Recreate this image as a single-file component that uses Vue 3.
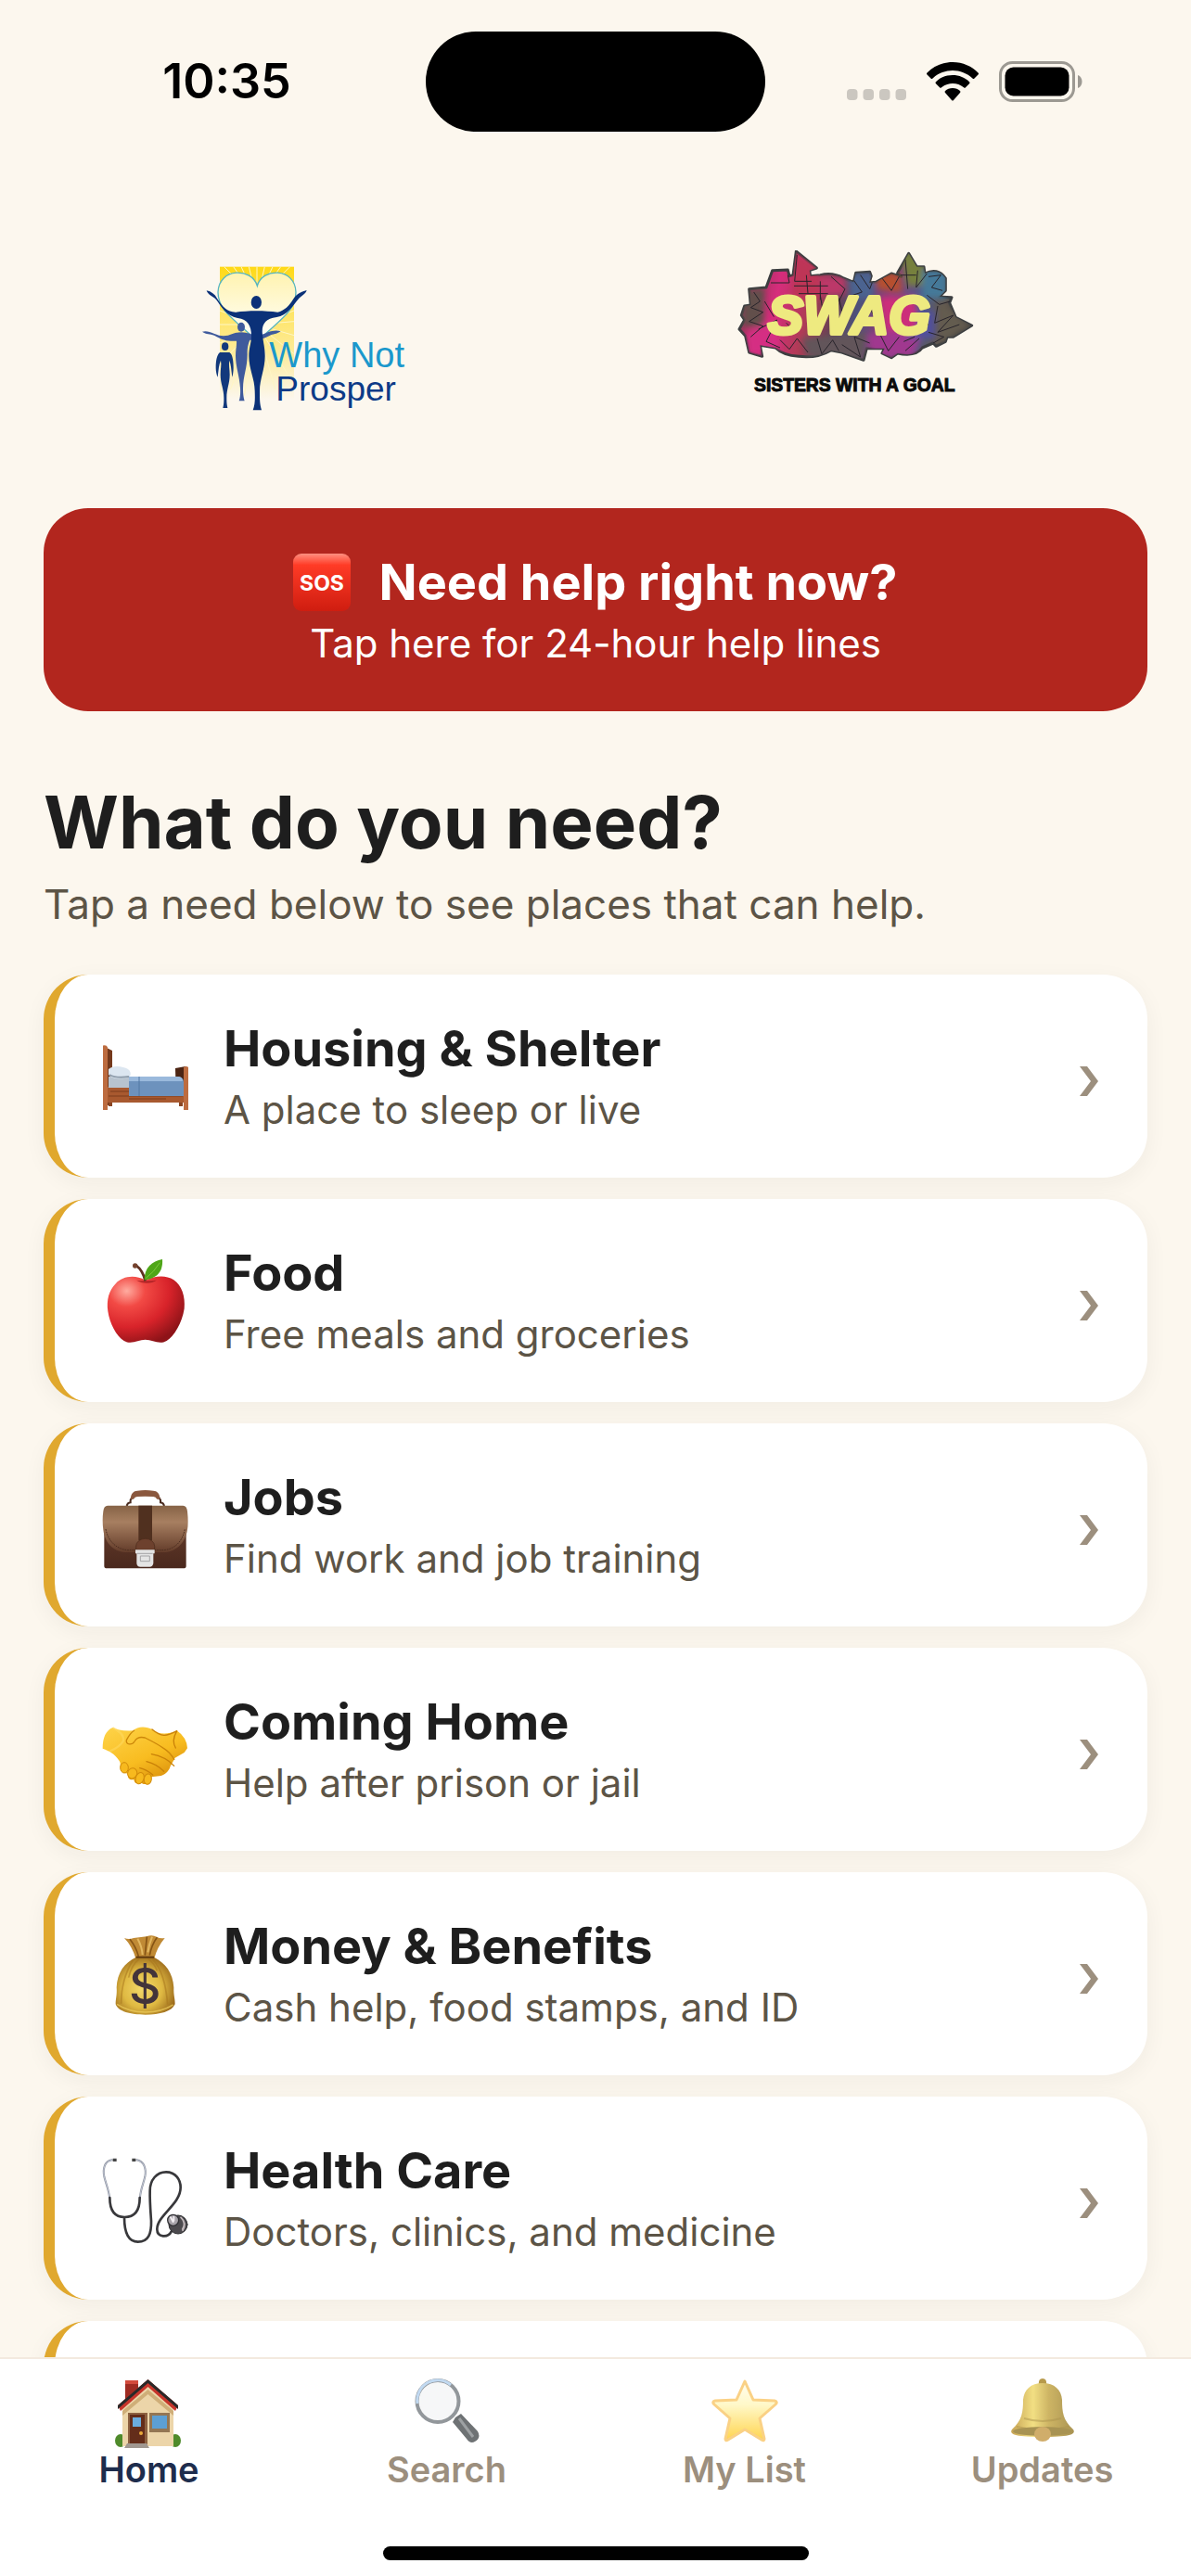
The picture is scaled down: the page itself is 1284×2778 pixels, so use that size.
<template>
  <div class="app">
    <header class="status-bar">
      <div class="status-side">
        <time class="clock">10:35</time>
      </div>
      <div class="island"></div>
      <div class="status-side status-icons">
        <svg class="signal" viewBox="0 0 64 12" aria-hidden="true">
          <rect v-for="n in 4" :key="n" :x="(n - 1) * 17.5" width="11.5" height="12" rx="4" />
        </svg>
        <svg class="wifi" viewBox="0 0 56 42" aria-hidden="true">
          <path d="M28 0C39 0 49 4.500 55.500 11.500q1 1 0 2L51.500 17.500q-1 1-2 0C43.500 12 36 9 28 9S12.500 12 6.500 17.500q-1 1-2 0L.5 13.500q-1-1 0-2C7 4.500 17 0 28 0Z" />
          <path d="M28 14c7 0 13.500 2.700 18 7.200q1 1 0 2L42 27.300q-1 1-2 0C36.500 24.500 32.500 23 28 23s-8.500 1.500-12 4.300q-1 1-2 0L10 23.200q-1-1 0-2C14.500 16.700 21 14 28 14Z" />
          <path d="M28 28c3.200 0 6 1.100 8 2.900q1 1 0 2L29 41q-1 1-2 0L20 32.900q-1-1 0-2C22 29.100 24.800 28 28 28Z" />
        </svg>
        <svg class="battery" viewBox="0 0 90 44" aria-hidden="true">
          <rect x="1.500" y="1.500" width="79" height="41" rx="13" fill="none" stroke="#9c9992" stroke-width="3" />
          <rect x="6.500" y="6.500" width="69" height="31" rx="9" />
          <path d="M85 15c6 2 6 12 0 14Z" fill="#9c9992" />
        </svg>
      </div>
    </header>

    <main class="content">
      <div class="logos">
        <svg class="logo" viewBox="-45 0 960 570" role="img" aria-label="Why Not Prosper">
          <defs>
            <linearGradient id="sun" x1="0" y1="0" x2="0" y2="1">
              <stop offset="0" stop-color="#ffd916" />
              <stop offset="0.3" stop-color="#ffe45c" />
              <stop offset="0.65" stop-color="#fdeb9c" />
              <stop offset="1" stop-color="#fcf7ee" />
            </linearGradient>
            <linearGradient id="heart" x1="0" y1="0" x2="0" y2="1">
              <stop offset="0" stop-color="#fff3b0" />
              <stop offset="1" stop-color="#ffffff" />
            </linearGradient>
          </defs>
          <rect x="111" y="53" width="240" height="430" fill="url(#sun)" />
          <g stroke="#fff6c4" stroke-width="3">
            <path d="M231 160 125 53M231 160 155 53M231 160 180 53M231 160 205 53M231 160V53M231 160 256 53M231 160 282 53M231 160 308 53M231 160 338 53" />
            <path d="M231 240 111 195M231 240 111 240M231 240 111 300M231 240 111 370M231 240 145 450M231 240 190 470M231 240 351 195M231 240 351 230M231 240 351 275M231 240 351 335M231 240 330 400M231 240 290 450" />
          </g>
          <path d="M232 115C215 55 108 55 105 135c0 65 65 95 127 160 65-65 125-95 125-160C354 55 248 55 232 115Z" fill="url(#heart)" stroke="#56b5c0" stroke-width="4" />
          <!-- smaller figures -->
          <g fill="#3f5a9c">
            <ellipse cx="180" cy="248" rx="12" ry="15" />
            <path d="M54 263c12-4 24 0 38 6 24 10 38 10 62 0 18-6 36-6 54 0 20 10 34 8 58-4 14-4 28-8 42-3-14 10-24 8-36 14-24 12-42 16-64 14-8 20-8 30-8 46 0 45-14 70-14 110 0 20 2 30 5 41h-18c4-10 5-25 4-41-2-40-15-70-15-105 0-20 4-32 3-48-24 2-46-2-72-18-14-6-26-2-39-12Z" />
          </g>
          <g fill="#12397c">
            <ellipse cx="128" cy="311" rx="11" ry="13" />
            <path d="M112 330h30c10 5 13 28 13 50 0 12-2 24-4 30-3-24-4-42-9-54-3 15 1 28 1 46 0 30-10 46-10 75 0 14 0 20 3 33h-15c3-13 3-19 3-33 0-29-11-45-11-75 0-18 4-31 1-46-6 12-7 30-10 54-3-6-6-18-6-30 0-24 4-45 14-50Z" />
          </g>
          <g fill="#0b3178">
            <ellipse cx="229" cy="168" rx="17" ry="21" />
            <path d="M68 130c15 3 27 12 34 25 18 28 32 43 60 45 40-6 95-6 136 0 22-5 38-22 50-42 10-15 24-24 44-29-4 12-16 18-25 26-20 24-38 55-72 61-40 5-50 26-46 58 3 28 8 42 8 68 0 42-17 75-17 112 0 30 0 43 6 63h-28c7-20 7-33 6-63 0-38-19-70-19-112 0-26 8-42 8-66 0-32-12-53-44-57-36-5-54-38-70-60-12-12-26-14-31-29Z" />
          </g>
          <text x="271" y="379" font-size="114" class="logo-name" fill="#1b98cc">Why Not</text>
          <text x="292" y="485" font-size="111" class="logo-name" fill="#0d3a87">Prosper</text>
        </svg>

        <svg class="logo" viewBox="-3 45 960 570" role="img" aria-label="SWAG, Sisters With A Goal">
          <defs>
            <linearGradient id="spray" x1="0" y1="0" x2="1" y2="0.1">
              <stop offset="0" stop-color="#5b474c" />
              <stop offset="0.1" stop-color="#a5325f" />
              <stop offset="0.2" stop-color="#d62c7c" />
              <stop offset="0.34" stop-color="#b03c56" />
              <stop offset="0.46" stop-color="#684154" />
              <stop offset="0.56" stop-color="#4c527c" />
              <stop offset="0.68" stop-color="#8d3c76" />
              <stop offset="0.82" stop-color="#4d5a8b" />
              <stop offset="0.92" stop-color="#61574f" />
              <stop offset="1" stop-color="#3f3b38" />
            </linearGradient>
            <clipPath id="wall"><path :d="wallPath" /></clipPath>
            <filter id="mist"><feGaussianBlur stdDeviation="9" /></filter>
          </defs>
          <path :d="wallPath" fill="url(#spray)" stroke="#3c3e40" stroke-width="9" stroke-linejoin="round" />
          <g clip-path="url(#wall)">
            <g filter="url(#mist)">
              <path d="M60 180 130 165 125 290 60 290Z" fill="#624f4b" />
              <path d="M70 310 170 270 180 370 80 385Z" fill="#d52f83" />
              <path d="M225 50 300 100 320 200 220 200Z" fill="#be3457" />
              <path d="M250 330 460 310 450 400 270 390Z" fill="#62545a" />
              <path d="M310 130h80v60h-80Z" fill="#bc3869" />
              <path d="M400 120h85l-5 80h-70Z" fill="#4b6390" />
              <path d="M490 120h75l10 60-80-10Z" fill="#b6502d" />
              <path d="M570 50h75v110h-55Z" fill="#76803c" />
              <path d="M640 110h80v90h-80Z" fill="#447999" />
              <path d="M460 320 650 290 610 390 480 390Z" fill="#a0388f" />
              <path d="M590 240h90v90h-90Z" fill="#51509c" />
              <path d="M690 200 800 290 690 350Z" fill="#635c50" />
              <path d="M500 195h120v110H520Z" fill="#cc2d7a" />
            </g>
            <path d="M150 150h60l-5-25M235 60l-8 85h55M225 160h110M240 185h95M265 125l5 60M310 145v60M95 180l20 30-30 20 40 15-45 30 45 15-40 35M110 300l60-30-35 70 45 20M180 335l30 30 25-35 35 45M300 330l15 50 35-45 20 35M380 350l60 40-20-65 50 20M345 130l45 40-20 40M410 130l35 50-30 10M440 125l30 45 15-40M510 135l30 40 25-45M585 75l8 95M570 125h50M625 110l-5 55 35-45M660 130l40-5-30 40 35 10M655 190l40 30 35-10M690 225l-10 55 60-25-50 55 70-25M630 330l-45 40M505 320l25 50 35-45M580 340l35-15M620 250l40 35-45 35M660 310l50 15-35 20M310 190l15 90M370 200l20 80M465 220l30 60M200 280l30 30M130 210l30 50" fill="none" stroke="#28242b" stroke-width="3" stroke-linejoin="round" />
          </g>
          <text class="swag" x="140" y="316">SWAG</text>
          <text x="96" y="500" class="swag-sub">SISTERS WITH A GOAL</text>
        </svg>
      </div>

      <button class="sos-banner" type="button">
        <span class="sos-title">
          <svg class="sos-icon" viewBox="0 0 62 62" aria-hidden="true">
            <defs>
              <linearGradient id="sos" x1="0" y1="0" x2="0" y2="1">
                <stop offset="0" stop-color="#ff8f80" />
                <stop offset="0.2" stop-color="#ff3b26" />
                <stop offset="1" stop-color="#cf1d10" />
              </linearGradient>
            </defs>
            <rect width="62" height="62" rx="9" fill="url(#sos)" />
            <text x="31" y="40" text-anchor="middle">SOS</text>
          </svg>
          Need help right now?
        </span>
        <span class="sos-sub">Tap here for 24-hour help lines</span>
      </button>

      <h1>What do you need?</h1>
      <p class="intro">Tap a need below to see places that can help.</p>

      <ul class="needs">
        <li v-for="need in needs" :key="need.icon">
          <button class="card" type="button">
            <svg class="need-icon" :viewBox="need.viewBox" aria-hidden="true">
              <g v-if="need.icon === 'bed'">
                <path d="M82 39 93 37V75H83Z" fill="#4b2413" />
                <path d="M4 15 14 20V79H4Z" fill="#75391c" />
                <rect x="9" y="59" width="84" height="17" fill="#a8592f" />
                <path d="M10 69h80M12 64h20M32 72h40" stroke="#7d3d1d" stroke-width="1" />
                <path d="M10 48h24v12H10Z" fill="#b8c3ce" />
                <path d="M10 40c5-5 16-3 21 0 4 3 3 7 1 9-8 2-18 2-22-3Z" fill="#dce6f0" />
                <path d="M11 46c7 4 15 3 21 2" fill="none" stroke="#8f9dab" stroke-width="2" />
                <path d="M32 48h54q5 1 5 6v15H32Z" fill="#6d92bd" />
                <path d="M32 48h54q4 1 4 5H32Z" fill="#9ab9dc" />
                <path d="M43 48v21" stroke="#5379a4" stroke-width="1" />
                <path d="M4 14.500q4-1 5 2V84H4ZM91 38q3-2 5 0V84H91Z" fill="#bd6c40" />
                <path d="M10 76h4v4h-4ZM86 76h4v4h-4Z" fill="#8a4523" />
              </g>
              <g v-else-if="need.icon === 'apple'">
                <defs>
                  <radialGradient id="apple" cx="0.25" cy="0.22" r="0.85">
                    <stop offset="0" stop-color="#ffaca0" />
                    <stop offset="0.28" stop-color="#f24a45" />
                    <stop offset="0.65" stop-color="#d8232a" />
                    <stop offset="1" stop-color="#8e1318" />
                  </radialGradient>
                </defs>
                <path d="M200 150C165 130 125 138 105 160 82 182 74 215 79 250c5 38 28 82 52 96 25 14 45-4 69-4s44 18 69 4c24-14 50-58 57-104 4-40-8-75-34-93-26-17-60-14-92 1Z" fill="url(#apple)" />
                <path d="M172 150c18 12 48 12 64 0-20 2-44 2-64 0Z" fill="#8e1318" opacity="0.6" />
                <path d="M200 152C194 128 184 112 170 102" fill="none" stroke="#5f3020" stroke-width="8" />
                <circle cx="167" cy="103" r="8" fill="#75432e" />
                <path d="M197 149C196 110 222 88 255 82c3 36-14 62-58 67Z" fill="#4fa618" />
                <path d="M202 143q25-18 45-50" fill="none" stroke="#7bc93b" stroke-width="3" />
              </g>
              <g v-else-if="need.icon === 'briefcase'">
                <defs>
                  <linearGradient id="flap" x1="0" y1="0" x2="0" y2="1">
                    <stop offset="0" stop-color="#866346" />
                    <stop offset="0.35" stop-color="#a77f61" />
                    <stop offset="1" stop-color="#633c2a" />
                  </linearGradient>
                  <linearGradient id="case" x1="0" y1="0" x2="0" y2="1">
                    <stop offset="0.4" stop-color="#5b3526" />
                    <stop offset="1" stop-color="#4a281d" />
                  </linearGradient>
                </defs>
                <path d="M140 130q2-10 12-11v-8l8-12M261 130q-2-10-12-11v-8l-8-12" fill="none" stroke="#4a2c20" stroke-width="6" />
                <path d="M152 108c2-20 10-26 22-27q26-4 52 0c12 1 20 7 22 27h-10q-4-7-12-8-27-2-52 0-8 1-12 8Z" fill="#8a573d" />
                <path d="M67 170h265v154q0 8-9 8H76q-9 0-9-8Z" fill="url(#case)" />
                <path d="M78 129h244q12 0 14 18 4 36 0 60c-8 48-42 73-78 73H142c-40 0-72-25-78-73q-4-30 0-60 2-18 14-18Z" fill="url(#flap)" />
                <path d="M72 205c8 42 38 66 72 68h114c35-2 62-26 70-68" fill="none" stroke="#4b2d20" stroke-width="3" stroke-dasharray="5 3" />
                <path d="M178 129h44v112h-44Z" fill="#50301f" />
                <path d="M170 272v-12a30 24 0 0 1 60 0v12Z" fill="#6d412e" stroke="#482819" stroke-width="2" />
                <path d="M168 272h62v12h-4v32q-2 11-12 11h-30q-11 0-12-11v-32h-4Z" fill="#e4e4e4" />
                <path d="M174 284h50M184 292h30v17h-30Z" fill="none" stroke="#a4a4a6" stroke-width="3" />
              </g>
              <g v-else-if="need.icon === 'handshake'">
                <defs>
                  <linearGradient id="hands" x1="0" y1="0" x2="0.7" y2="1">
                    <stop offset="0" stop-color="#fed44a" />
                    <stop offset="0.6" stop-color="#f8bc20" />
                    <stop offset="1" stop-color="#d88d0b" />
                  </linearGradient>
                </defs>
                <path d="M95 97q18 12 65 10c15-16 45-14 62-4 18 15 45 20 80 4q32 22 34 57l-10 14-30 17-15 27c-5 18-20 30-36 32l-25 3-10 18c-12 10-20 4-24-2-12 10-22 4-23-8-14 4-22-4-18-20-15 3-27-8-26-24q2-10-3-16C100 180 85 174 62 165 62 130 72 106 95 97Z" fill="url(#hands)" />
                <path d="M95 98q38 18 34 42-12 20-44 34" fill="none" stroke="#ffdb65" stroke-width="7" opacity="0.5" />
                <path d="M165 106c-14 8-20 20-26 32-3 15 18 17 26 4 8-14 18-16 34-12 24 12 40 20 60 34 20 12 28 24 35 38" fill="none" stroke="#cc870a" stroke-width="4" />
                <path d="M222 103c30 25 45 24 80 5M302 108q-18 32-4 55M220 183q45 8 73 38M204 207q33 8 56 32M182 228q20 4 42 22" fill="none" stroke="#c98108" stroke-width="4" stroke-linecap="round" />
                <g fill="#f7b91e" stroke="#d18a0a" stroke-width="3">
                  <ellipse cx="132" cy="227" rx="13" ry="17" />
                  <ellipse cx="158" cy="245" rx="15" ry="17" transform="rotate(20 158 245)" />
                  <ellipse cx="182" cy="261" rx="13" ry="19" transform="rotate(20 182 261)" />
                  <ellipse cx="208" cy="264" rx="12" ry="17" transform="rotate(10 208 264)" />
                </g>
              </g>
              <g v-else-if="need.icon === 'money'">
                <defs>
                  <radialGradient id="sack" cx="0.45" cy="0.55" r="0.6">
                    <stop offset="0" stop-color="#f4d96a" />
                    <stop offset="0.55" stop-color="#dfb942" />
                    <stop offset="1" stop-color="#99671a" />
                  </radialGradient>
                </defs>
                <path d="M132 88q15 6 30 0l42-5q18-7 34 2 10 6 25 3-25 30-34 66h-60q-12-40-37-66Z" fill="#c08a35" />
                <path d="M150 92q20 25 28 55M205 84l-6 60M238 86q-18 25-24 58" fill="none" stroke="#865415" stroke-width="5" />
                <path d="M175 90q14 25 16 52M222 84q-10 25-14 50" fill="none" stroke="#e2b862" stroke-width="6" />
                <path d="M170 150h58c36 18 62 50 64 98-1 26 4 34 4 54-10 24-48 34-96 34s-88-10-96-34c0-18 5-30 3-54 2-48 25-80 63-98Z" fill="url(#sack)" />
                <path d="M160 160q-38 60-38 140M180 156q-25 20-34 60M224 158q40 40 48 145M210 156q20 15 28 38" fill="none" stroke="#a8761d" stroke-width="5" opacity="0.55" />
                <path d="M108 302q40 26 92 26t90-24" fill="none" stroke="#f0cf5c" stroke-width="5" opacity="0.7" />
                <path d="M170 150h58" stroke="#60390f" stroke-width="6" />
                <text x="199" y="300" class="dollar">$</text>
              </g>
              <g v-else-if="need.icon === 'stethoscope'" fill="none" stroke-linecap="round">
                <path d="M92 86C68 90 62 115 67 140c5 22 14 40 17 66M172 86c24 4 32 29 27 54-5 22-14 40-16 66" stroke="#8a8f9d" stroke-width="6" />
                <path d="M92 86C68 90 62 115 67 140c5 22 14 40 17 66M172 86c24 4 32 29 27 54-5 22-14 40-16 66" stroke="#dce2ef" stroke-width="2" />
                <path d="M95 86h12M157 86h12" stroke="#444" stroke-width="10" stroke-linecap="butt" />
                <path d="M85 208c0 40 14 63 48 63s49-23 49-63M132 272c0 50 12 79 44 79 35 0 44-28 43-68-2-30-5-65-4-97 0-36 22-61 52-61 32 0 47 25 47 50 0 55-76 90-76 135 0 28 36 28 46 8" stroke="#38383b" stroke-width="8" />
                <circle cx="306" cy="295" r="30" fill="#4c4a4e" stroke="#2d2d30" stroke-width="3" />
                <path d="M315 272q20 18 6 42M322 282q8 14-2 28" stroke="#c3b9bc" stroke-width="5" />
                <circle cx="290" cy="281" r="18" fill="#a7a3a9" stroke="#323236" stroke-width="4" />
                <path d="M282 272l8 14M292 270v12" stroke="#f2eef2" stroke-width="6" />
              </g>
            </svg>
            <span class="card-text">
              <span class="card-title">{{ need.title }}</span>
              <span class="card-sub">{{ need.sub }}</span>
            </span>
            <svg v-if="need.title" class="chevron" viewBox="0 0 20 32" aria-hidden="true">
              <path d="M0 0H8L20 16 8 32H0L12 16Z" />
            </svg>
          </button>
        </li>
      </ul>
    </main>

    <nav class="tab-bar">
      <a v-for="tab in tabs" :key="tab.label" href="#" class="tab" :class="{ active: tab.active }">
        <svg class="tab-icon" viewBox="0 0 76 76" aria-hidden="true">
          <g v-if="tab.label === 'Home'">
            <path d="M12 3h14v24H12Z" fill="#9f2b22" />
            <path d="M12 3h14v4H12Z" fill="#d24a3c" />
            <ellipse cx="7" cy="68" rx="6" ry="7" fill="#4f8b2b" />
            <ellipse cx="66" cy="68" rx="6" ry="7" fill="#4f8b2b" />
            <path d="M9 33 36.500 9 64 33V74H9Z" fill="#ecd5a9" />
            <path d="M9 36 36.500 13 64 36v5L36.500 18 9 41Z" fill="#cfae78" />
            <path d="M36.500 2 69 30 66 36 36.500 10 7 36 4 30Z" fill="#c7352b" />
            <path d="M36.500 2 69 30v4L36.500 6 4 34v-4Z" fill="#292929" />
            <path d="M15 38h21v34H15Z" fill="#8c6040" />
            <path d="M17 40h16v31H17Z" fill="#642d1a" />
            <path d="M20 43h9v10h-9Z" fill="#6bacde" />
            <circle cx="29" cy="60" r="2" fill="#e9a93a" />
            <path d="M38 38h22v21H38Z" fill="#947653" />
            <path d="M41 41h16v14H41Z" fill="#5c9fd4" />
            <path d="M14 71h21l3 5H11Z" fill="#a09790" />
          </g>
          <g v-else-if="tab.label === 'Search'">
            <path d="M47 43l6-4 18 19q4 7-3 11-5 3-9-3L44 48Z" fill="#6e7274" />
            <path d="M51 44l15 20" stroke="#9da1a3" stroke-width="3" />
            <circle cx="28" cy="25.500" r="22.500" fill="#f6f7f8" stroke="#92979b" stroke-width="4" />
            <path d="M6 28A22 22 0 0 1 42 8" fill="none" stroke="#c1d9f1" stroke-width="3" />
          </g>
          <g v-else-if="tab.label === 'My List'">
            <defs>
              <linearGradient id="star" x1="0" y1="0" x2="0" y2="1">
                <stop offset="0" stop-color="#fffdf1" />
                <stop offset="0.4" stop-color="#fff8c8" />
                <stop offset="1" stop-color="#ffd44e" />
              </linearGradient>
            </defs>
            <path d="M38 4 47 24 70 25q4 1 1 4L54 44 59 66q0 3-3 1L38 56 20 67q-3 2-3-1L22 44 5 29q-3-3 1-4L29 24Z" fill="url(#star)" stroke="#fad185" stroke-width="3" stroke-linejoin="round" />
          </g>
          <g v-else>
            <defs>
              <linearGradient id="bell" x1="0" y1="0" x2="1" y2="0">
                <stop offset="0" stop-color="#c7a455" />
                <stop offset="0.35" stop-color="#f2df83" />
                <stop offset="0.6" stop-color="#cdb464" />
                <stop offset="1" stop-color="#aa9453" />
              </linearGradient>
            </defs>
            <path d="M34 8q-1-7 4-7t4 7Z" fill="#b79a4c" />
            <path d="M38 6c13 0 20 7 21 18 0 13 1 22 12 32 4 6-7 8-33 8S1 62 5 56C16 46 17 37 17 24 18 13 25 6 38 6Z" fill="url(#bell)" />
            <path d="M18 44q20 6 40 0M10 53q28 7 56 0" fill="none" stroke="#ab934d" stroke-width="2" opacity="0.5" />
            <ellipse cx="38" cy="58" rx="32" ry="5" fill="#a89353" />
            <ellipse cx="38" cy="61" rx="9" ry="8" fill="#d0ad6a" />
          </g>
        </svg>
        <span>{{ tab.label }}</span>
      </a>
    </nav>
    <div class="home-indicator"><span></span></div>
  </div>
</template>

<script setup>
import { ref } from 'vue';

const needs = ref([
  { icon: 'bed', viewBox: '0 0 96 96', title: 'Housing & Shelter', sub: 'A place to sleep or live' },
  { icon: 'apple', viewBox: '51 73 288 288', title: 'Food', sub: 'Free meals and groceries' },
  { icon: 'briefcase', viewBox: '51 49 288 288', title: 'Jobs', sub: 'Find work and job training' },
  { icon: 'handshake', viewBox: '51 25 288 288', title: 'Coming Home', sub: 'Help after prison or jail' },
  { icon: 'money', viewBox: '51 61 288 288', title: 'Money & Benefits', sub: 'Cash help, food stamps, and ID' },
  { icon: 'stethoscope', viewBox: '51 67 288 288', title: 'Health Care', sub: 'Doctors, clinics, and medicine' },
  { icon: 'next', viewBox: '0 0 96 96', title: '', sub: '' }
]);

const tabs = ref([
  { label: 'Home', active: true },
  { label: 'Search' },
  { label: 'My List' },
  { label: 'Updates' }
]);

// graffiti silhouette, shared by the fill and the clip
const wallPath = 'M232 48 298 102 275 110 278 128 310 125Q350 115 385 135L418 148 425 118 470 115 475 128 468 150 490 148 540 120 572 130 560 118 596 55 622 98 645 98 648 120Q690 100 715 135L715 175 695 195 735 197 728 215 748 262 800 288 740 325 720 325 715 340 685 355 675 345 640 360Q620 390 560 378L540 392 510 378 518 362 460 362 450 400 380 375 345 368Q300 395 240 388 190 385 165 360L115 352 122 388 80 375 68 322 48 300 65 270 55 255 65 225 85 222 80 170 135 165 155 110 205 108 210 128 222 125Z';
</script>

<style>
body {
  background: #fcf7ee;
}
</style>

<style scoped>
.app {
  display: flex;
  flex-direction: column;
  height: 100vh;
  overflow: hidden;
  background: #fcf7ee;
  color: #1e1e1e;
  font-family: Inter, "Liberation Sans", sans-serif;
}

button {
  border: 0;
  font: inherit;
  color: inherit;
  cursor: pointer;
}

.status-bar {
  display: grid;
  grid-template-columns: 1fr 366px 1fr;
  align-items: center;
  padding: 34px 30px;
  flex-shrink: 0;
}

.status-side {
  display: flex;
  justify-content: center;
  align-items: center;
}

.clock {
  font-size: 52px;
  line-height: 60px;
  font-weight: 600;
  color: #000;
}

.island {
  height: 108px;
  border-radius: 54px;
  background: #000;
}

.status-icons {
  gap: 22px;
}

.signal {
  width: 64px;
  height: 12px;
  margin-bottom: 2px;
  fill: #cbc7c0;
  align-self: flex-end;
}

.wifi {
  width: 56px;
  height: 42px;
}

.battery {
  width: 90px;
  height: 44px;
}

.content {
  flex: 1;
  min-height: 0;
  overflow: hidden;
  padding: 94px 47px 0;
}

.logos {
  display: grid;
  grid-template-columns: 1fr 1fr;
  justify-items: center;
  margin-bottom: 88px;
}

.logo {
  width: 320px;
  height: 190px;
}

.logo-name {
  font-family: "Liberation Sans", sans-serif;
  stroke: currentColor;
  stroke-width: 0;
}

.swag {
  font-family: "Liberation Sans", sans-serif;
  font-size: 172px;
  font-weight: 700;
  font-style: italic;
  fill: #eeea80;
  stroke: #eeea80;
  stroke-width: 12px;
  stroke-linejoin: round;
}

.swag-sub {
  font-family: "Liberation Sans", sans-serif;
  font-size: 58px;
  font-weight: 700;
  fill: #0b0b0b;
  stroke: #0b0b0b;
  stroke-width: 3px;
}

.sos-banner {
  display: flex;
  flex-direction: column;
  align-items: center;
  gap: 9px;
  width: 100%;
  padding: 48px;
  border-radius: 48px;
  background: #b2261e;
  color: #fff;
}

.sos-title {
  display: flex;
  align-items: center;
  gap: 30px;
  font-size: 54px;
  line-height: 64px;
  font-weight: 700;
}

.sos-icon {
  width: 62px;
  height: 62px;
}

.sos-icon text {
  font-size: 23px;
  font-weight: 700;
  fill: #fff;
}

.sos-sub {
  font-size: 42px;
  line-height: 50px;
}

h1 {
  margin: 72px 0 10px;
  font-size: 78px;
  line-height: 96px;
  font-weight: 700;
}

.intro {
  margin: 0 0 46px;
  font-size: 44px;
  line-height: 60px;
  color: #5c5446;
}

.needs {
  display: flex;
  flex-direction: column;
  gap: 23px;
  margin: 0;
  padding: 0;
  list-style: none;
}

.card {
  display: flex;
  align-items: center;
  gap: 38px;
  width: 100%;
  min-height: 219px;
  padding: 48px 53px 48px 48px;
  border-left: 12px solid #e0a82e;
  border-radius: 48px;
  background: #fff;
  box-shadow: 0 6px 24px rgba(30, 30, 30, 0.05);
  text-align: left;
}

.need-icon {
  width: 96px;
  height: 96px;
  flex-shrink: 0;
}

.dollar {
  font-size: 160px;
  font-weight: 500;
  text-anchor: middle;
  fill: #43343a;
}

.card-text {
  display: flex;
  flex-direction: column;
  gap: 9px;
  flex: 1;
}

.card-title {
  font-size: 54px;
  line-height: 64px;
  font-weight: 700;
}

.card-sub {
  font-size: 42px;
  line-height: 50px;
  color: #5c5446;
}

.chevron {
  width: 20px;
  height: 32px;
  margin-top: 10px;
  fill: #9c8f7e;
}

.tab-bar {
  display: grid;
  grid-template-columns: repeat(4, 1fr);
  padding-top: 20px;
  border-top: 2px solid #f3eadf;
  background: #fff;
  flex-shrink: 0;
}

.tab {
  display: flex;
  flex-direction: column;
  align-items: center;
  font-size: 38px;
  line-height: 46px;
  font-weight: 600;
  color: #9c8f7e;
  text-decoration: none;
}

.tab.active {
  color: #1e2d4d;
}

.tab-icon {
  width: 76px;
  height: 76px;
}

.home-indicator {
  display: flex;
  justify-content: center;
  padding: 60px 0 17px;
  background: #fff;
  flex-shrink: 0;
}

.home-indicator span {
  width: 459px;
  height: 15px;
  border-radius: 8px;
  background: #000;
}
</style>
